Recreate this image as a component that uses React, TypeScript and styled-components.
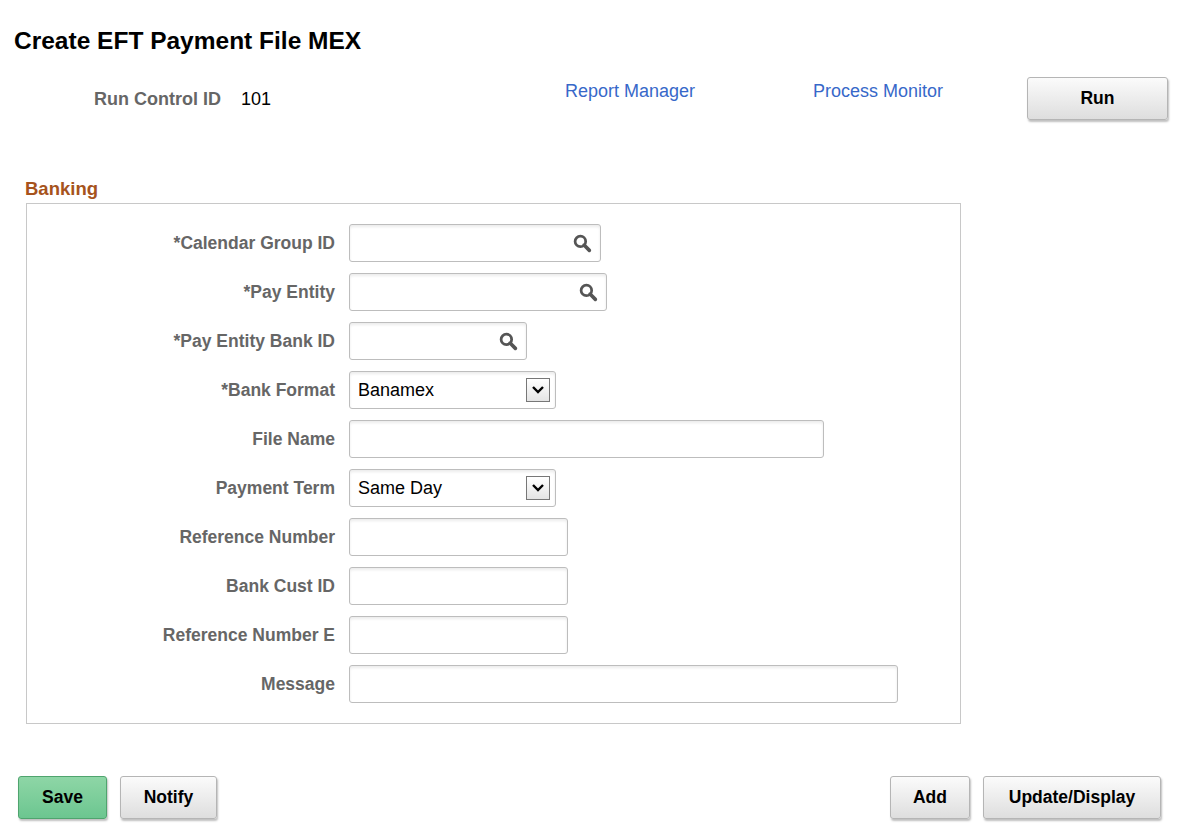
import React from "react";
import styled, { createGlobalStyle } from "styled-components";

const Global = createGlobalStyle`
  body { margin: 0; font-family: "Liberation Sans", Arial, sans-serif; background: #fff; }
`;

const Page = styled.div`
  width: 1201px;
  height: 827px;
  position: relative;
`;

const Title = styled.h1`
  margin: 0;
  padding: 28px 0 0 14px;
  font-size: 24.5px;
  font-weight: bold;
  color: #000;
  height: 50px;
  box-sizing: border-box;
  line-height: 26px;
`;

const TopRow = styled.div`
  display: flex;
  align-items: flex-start;
  height: 128px;
  padding-top: 27px;
  box-sizing: border-box;
`;

const RunCtl = styled.div`
  margin: 12px 0 0 94px;
  display: flex;
  gap: 20px;
  font-size: 18px;
  width: 471px;
`;

const Lbl = styled.span`
  color: #666;
  font-weight: bold;
`;

const Link = styled.a<{ w: number }>`
  color: #3768c9;
  font-size: 18px;
  margin-top: 4px;
  width: ${(p) => p.w}px;
  text-decoration: none;
`;

const Btn = styled.button<{ w: number; green?: boolean }>`
  width: ${(p) => p.w}px;
  height: 43px;
  border: 1px solid ${(p) => (p.green ? "#4fa46e" : "#b5b5b5")};
  border-radius: 3px;
  background: ${(p) =>
    p.green
      ? "linear-gradient(#8ed6a6, #6cc690)"
      : "linear-gradient(#fbfbfb, #dedede)"};
  box-shadow: 1px 2px 2px rgba(0, 0, 0, 0.25);
  font-family: "Liberation Sans", Arial, sans-serif;
  font-size: 17.5px;
  font-weight: bold;
  color: #000;
  padding: 0;
`;

const Section = styled.h2`
  margin: 0;
  padding: 0 0 0 25px;
  font-size: 18.5px;
  font-weight: bold;
  color: #a6531c;
  height: 25px;
  line-height: 22px;
`;

const Box = styled.div`
  margin-left: 26px;
  width: 935px;
  height: 521px;
  border: 1px solid #c8c8c8;
  box-sizing: border-box;
  padding-top: 20px;
  display: grid;
  grid-template-columns: 308px auto;
  column-gap: 14px;
  row-gap: 11px;
  align-content: start;
  align-items: center;
`;

const FieldLabel = styled.label`
  text-align: right;
  color: #666;
  font-weight: bold;
  font-size: 17.5px;
`;

const Input = styled.div<{ w: number }>`
  width: ${(p) => p.w}px;
  height: 38px;
  box-sizing: border-box;
  border: 1px solid #bdbdbd;
  border-radius: 3px;
  box-shadow: inset 0 2px 3px rgba(0, 0, 0, 0.08);
  display: flex;
  align-items: center;
  justify-content: space-between;
  padding: 0 8px;
  font-size: 18px;
  color: #000;
  background: #fff;
`;

const DropBtn = styled.span`
  width: 24px;
  height: 24px;
  box-sizing: border-box;
  border: 1px solid #777;
  background: linear-gradient(#fff, #e4e4e4);
  display: flex;
  align-items: center;
  justify-content: center;
  margin-right: -3px;
`;

const Footer = styled.div`
  display: flex;
  gap: 13px;
  padding: 52px 40px 0 18px;
`;

const Spacer = styled.div`
  flex: 1;
`;

const Search = () => (
  <svg width="19" height="19" viewBox="0 0 18 18">
    <circle cx="7" cy="7" r="5" fill="none" stroke="#555" strokeWidth="2.6" />
    <path d="M10.5 10.5 L15.5 15.5" stroke="#555" strokeWidth="3.4" strokeLinecap="round" />
  </svg>
);

const Chevron = () => (
  <svg width="14" height="10" viewBox="0 0 14 10">
    <path d="M2 2 L7 7 L12 2" fill="none" stroke="#000" strokeWidth="2.4" />
  </svg>
);

type Field = { label: string; w: number; kind?: "search" | "select"; value?: string };

const fields: Field[] = [
  { label: "*Calendar Group ID", w: 252, kind: "search" },
  { label: "*Pay Entity", w: 258, kind: "search" },
  { label: "*Pay Entity Bank ID", w: 178, kind: "search" },
  { label: "*Bank Format", w: 207, kind: "select", value: "Banamex" },
  { label: "File Name", w: 475 },
  { label: "Payment Term", w: 207, kind: "select", value: "Same Day" },
  { label: "Reference Number", w: 219 },
  { label: "Bank Cust ID", w: 219 },
  { label: "Reference Number E", w: 219 },
  { label: "Message", w: 549 },
];

export default function App() {
  return (
    <Page>
      <Global />
      <Title>Create EFT Payment File MEX</Title>
      <TopRow>
        <RunCtl>
          <Lbl>Run Control ID</Lbl>
          <span>101</span>
        </RunCtl>
        <Link w={248}>Report Manager</Link>
        <Link w={214}>Process Monitor</Link>
        <Btn w={141}>Run</Btn>
      </TopRow>
      <Section>Banking</Section>
      <Box>
        {fields.map((f) => (
          <React.Fragment key={f.label}>
            <FieldLabel>{f.label}</FieldLabel>
            <Input w={f.w}>
              <span>{f.value ?? ""}</span>
              {f.kind === "search" && <Search />}
              {f.kind === "select" && (
                <DropBtn>
                  <Chevron />
                </DropBtn>
              )}
            </Input>
          </React.Fragment>
        ))}
      </Box>
      <Footer>
        <Btn w={89} green>Save</Btn>
        <Btn w={97}>Notify</Btn>
        <Spacer />
        <Btn w={80}>Add</Btn>
        <Btn w={178}>Update/Display</Btn>
      </Footer>
    </Page>
  );
}
